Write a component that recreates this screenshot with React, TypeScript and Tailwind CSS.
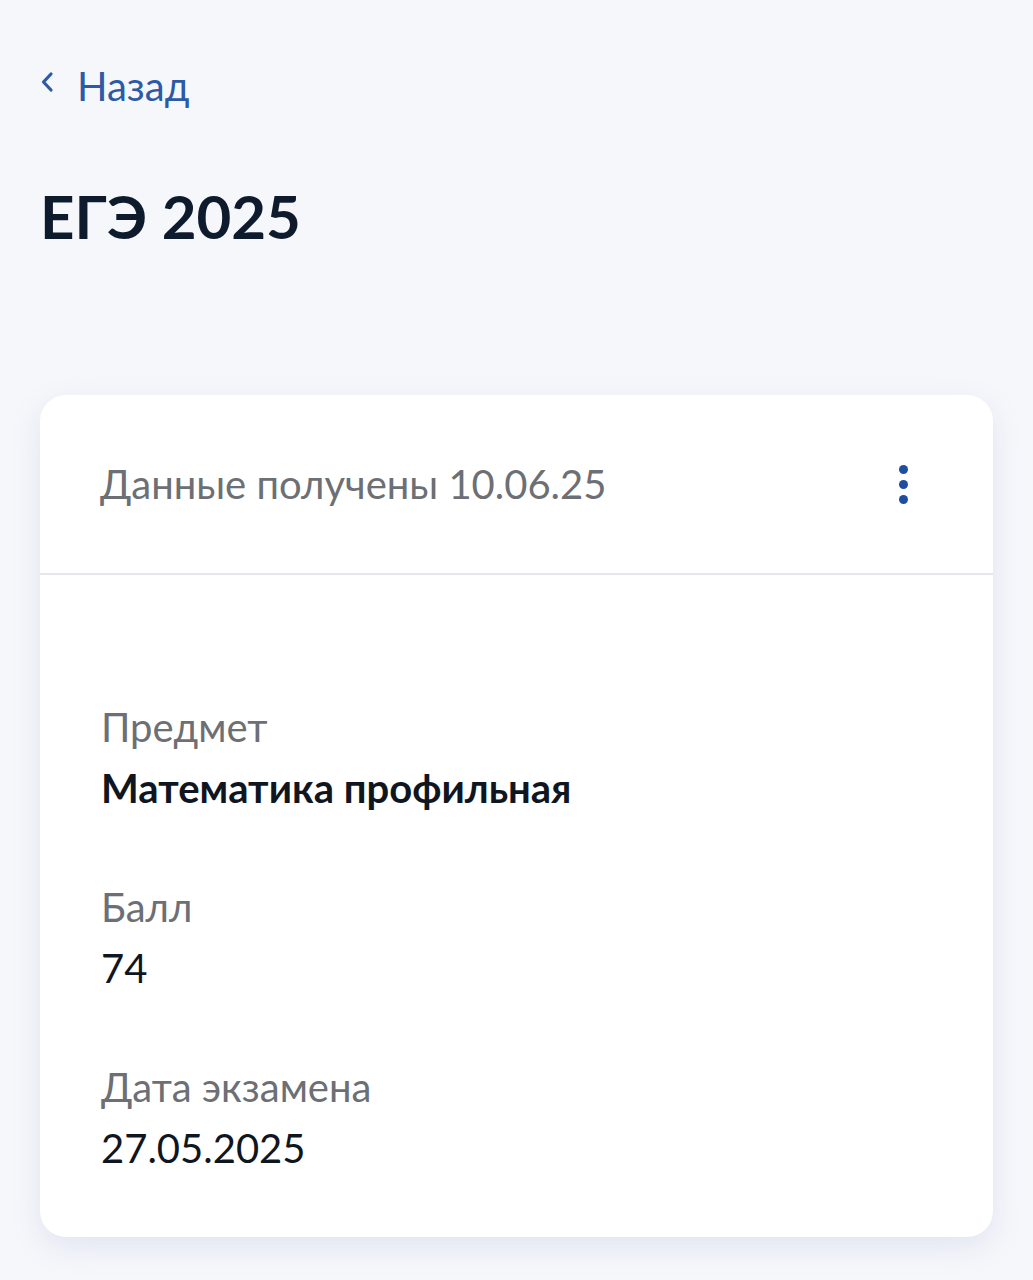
const fields = [
    { label: 'Предмет', value: 'Математика профильная', strong: true },
    { label: 'Балл', value: '74' },
    { label: 'Дата экзамена', value: '27.05.2025' },
];

function BackChevron() {
    return (
        <svg width="14" height="22" viewBox="0 0 14 22" fill="none" className="mt-[-8px]">
            <path d="M11 3 L3.5 11 L11 19" stroke="currentColor" strokeWidth="3.2" strokeLinecap="round" strokeLinejoin="round" />
        </svg>
    );
}

function MoreButton() {
    return (
        <button className="flex flex-col items-center gap-[6px] px-2">
            <span className="block w-[9px] h-[9px] rounded-full bg-[#1f4e9f]" />
            <span className="block w-[9px] h-[9px] rounded-full bg-[#1f4e9f]" />
            <span className="block w-[9px] h-[9px] rounded-full bg-[#1f4e9f]" />
        </button>
    );
}

export default function App() {
    return (
        <div className="min-h-[1280px] bg-[#f6f7fb] font-['Lato','Noto_Sans',sans-serif] px-[40px] pb-[44px]">
            <div className="pt-[62px]">
                <a className="inline-flex items-center gap-[23px] text-[#2c5aa6] text-[40px] leading-[48px]">
                    <BackChevron />
                    <span>Назад</span>
                </a>
            </div>

            <h1 className="mt-[70px] text-[60px] leading-[72px] font-bold text-[#0d1b2c]">ЕГЭ 2025</h1>

            <div className="mt-[143px] bg-white rounded-[26px] shadow-[0_10px_28px_rgba(200,208,230,0.45)] overflow-hidden">
                <div className="h-[180px] flex items-center justify-between pl-[60px] pr-[77px] border-b-2 border-[#e4e6eb]">
                    <span className="text-[40px] text-[#6c6f74]">Данные получены 10.06.25</span>
                    <MoreButton />
                </div>
                <div className="pl-[61px] pt-[122px] pb-[58px] flex flex-col gap-[58px]">
                    {fields.map(f => (
                        <div key={f.label} className="text-[40px] leading-[61px]">
                            <div className="text-[#6c6f74]">{f.label}</div>
                            <div className={f.strong ? 'font-bold text-[#10161f]' : 'text-[#10161f]'}>{f.value}</div>
                        </div>
                    ))}
                </div>
            </div>
        </div>
    );
}
